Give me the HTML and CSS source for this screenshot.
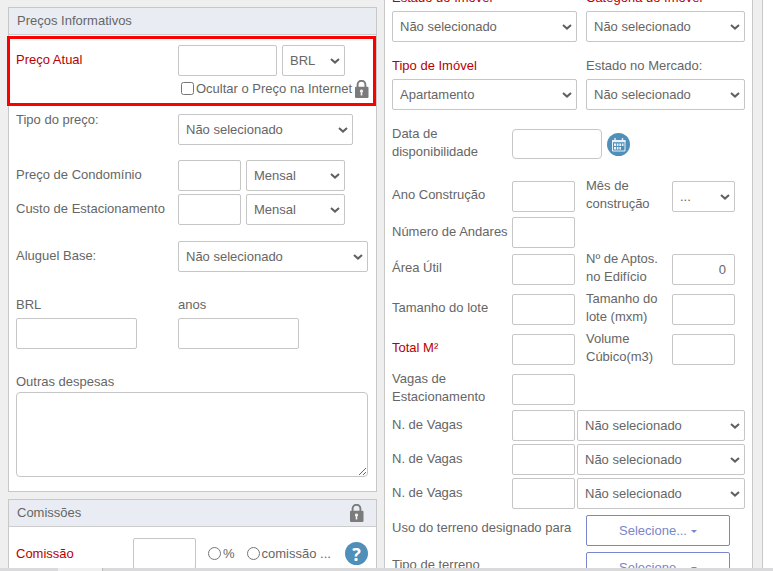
FILE: index.html
```html
<!DOCTYPE html>
<html lang="pt-BR">
<head>
<meta charset="utf-8">
<meta name="viewport" content="width=device-width, initial-scale=1">
<title>Cadastro de imóvel</title>
<link rel="stylesheet" href="styles.css">
</head>
<body>
<svg class="defs" aria-hidden="true">
  <symbol id="lock" viewBox="0 0 15 18">
    <path d="M3.600 8V4.600a3.900 3.900 0 0 1 7.800 0V8" fill="none" stroke="#7b7b7b" stroke-width="1.900"/>
    <rect x="1" y="6.700" width="13.500" height="11.300" rx="1" fill="#7b7b7b"/>
    <path d="M7.500 9.600a1.600 1.600 0 0 1 .8 3v2.800H6.700v-2.800a1.600 1.600 0 0 1 .8-3z" fill="#f2f2f2"/>
  </symbol>
</svg>
<main class="page">
  <div class="column">
    <section class="panel">
      <h2 class="panel-title">Preços Informativos</h2>
      <div class="panel-body">
        <div class="price-row highlight">
          <label class="label required" for="preco">Preço Atual</label>
          <div>
            <div class="controls">
              <input class="field mid" id="preco" type="text">
              <select class="field small" aria-label="Moeda"><option>BRL</option></select>
            </div>
            <div class="hide-price">
              <input class="tick" type="checkbox" id="ocultar">
              <label for="ocultar">Ocultar o Preço na Internet</label>
              <svg class="lock" aria-hidden="true"><use href="#lock"/></svg>
            </div>
          </div>
        </div>
        <div class="price-row type-row">
          <label class="label-top" for="tipo-preco">Tipo do preço:</label>
          <select class="field type-select" id="tipo-preco"><option>Não selecionado</option></select>
        </div>
        <div class="price-row spaced">
          <label class="label" for="condominio">Preço de Condomínio</label>
          <div class="controls">
            <input class="field small" id="condominio" type="text">
            <select class="field mid" aria-label="Período do condomínio"><option>Mensal</option></select>
          </div>
        </div>
        <div class="price-row tight">
          <label class="label" for="estacionamento">Custo de Estacionamento</label>
          <div class="controls">
            <input class="field small" id="estacionamento" type="text">
            <select class="field mid" aria-label="Período do estacionamento"><option>Mensal</option></select>
          </div>
        </div>
        <div class="price-row spaced">
          <label class="label" for="aluguel">Aluguel Base:</label>
          <select class="field" id="aluguel"><option>Não selecionado</option></select>
        </div>
        <div class="price-row terms">
          <div class="stack"><label for="brl">BRL</label><input class="field wide" id="brl" type="text"></div>
          <div class="stack"><label for="anos">anos</label><input class="field wide" id="anos" type="text"></div>
        </div>
        <div class="expenses">
          <label for="despesas">Outras despesas</label>
          <textarea class="expenses-text" id="despesas"></textarea>
        </div>
      </div>
    </section>
    <section class="panel">
      <h2 class="panel-title with-lock">Comissões <svg class="lock" aria-hidden="true"><use href="#lock"/></svg></h2>
      <div class="commission">
        <label class="required commission-label" for="comissao">Comissão</label>
        <input class="field small" id="comissao" type="text">
        <span class="choice percent"><input class="tick" type="radio" name="tipo-comissao" id="pct"><label for="pct">%</label></span>
        <span class="choice"><input class="tick" type="radio" name="tipo-comissao" id="fixa"><label for="fixa">comissão ...</label></span>
        <button class="help" type="button" aria-label="Ajuda">?</button>
      </div>
    </section>
  </div>

  <section class="panel details">
    <div class="pair">
      <div class="stack"><label class="required" for="estado">Estado do Imóvel</label><select class="field" id="estado"><option>Não selecionado</option></select></div>
      <div class="stack"><label class="required" for="categoria">Categoria do Imóvel</label><select class="field" id="categoria"><option>Não selecionado</option></select></div>
    </div>
    <div class="pair">
      <div class="stack"><label class="required" for="tipo">Tipo de Imóvel</label><select class="field" id="tipo"><option>Apartamento</option></select></div>
      <div class="stack"><label for="mercado">Estado no Mercado:</label><select class="field" id="mercado"><option>Não selecionado</option></select></div>
    </div>
    <div class="row tall date-row">
      <label for="data">Data de disponibilidade</label>
      <div class="date">
        <input class="field date-field" id="data" type="text">
        <button class="calendar" type="button" aria-label="Abrir calendário">
          <svg viewBox="0 0 23 23" aria-hidden="true">
            <circle cx="11.500" cy="11.500" r="11.500" fill="#4f8fb9"/>
            <path d="M5.500 7.500h12.500v10.500H5.500z" fill="none" stroke="#e8f2f8" stroke-width="1"/>
            <path d="M5 7h13.500v2.200H5z" fill="#e8f2f8"/>
            <path d="M8 5v3M15.500 5v3" stroke="#e8f2f8" stroke-width="1.400"/>
            <path d="M7 10.500h2v2.500H7zM9.800 10.500h1.700v2.500H9.800zM12.300 10.500h1.700v2.500h-1.700zM14.800 10.500h1.700v2.500h-1.700zM7 14h2v2.500H7zM9.800 14h1.700v2.500H9.800zM12.300 14h1.700v2.500h-1.700z" fill="#e8f2f8"/>
          </svg>
        </button>
      </div>
    </div>
    <div class="row tall year-row">
      <label class="one-line" for="ano">Ano Construção</label><input class="field small" id="ano" type="text">
      <label for="mes">Mês de construção</label><select class="field small" id="mes"><option>...</option></select>
    </div>
    <div class="row">
      <label class="label" for="andares">Número de Andares</label><input class="field small" id="andares" type="text">
    </div>
    <div class="row tall area-row">
      <label class="one-line" for="area">Área Útil</label><input class="field small" id="area" type="text">
      <label for="aptos">Nº de Aptos.<br>no Edifício</label><input class="field small number" id="aptos" type="text" value="0">
    </div>
    <div class="row tall">
      <label class="one-line" for="lote">Tamanho do lote</label><input class="field small" id="lote" type="text">
      <label for="lote-m">Tamanho do lote (mxm)</label><input class="field small" id="lote-m" type="text">
    </div>
    <div class="row tall">
      <label class="one-line required" for="total">Total M²</label><input class="field small" id="total" type="text">
      <label for="volume">Volume Cúbico(m3)</label><input class="field small" id="volume" type="text">
    </div>
    <div class="row tall">
      <label for="vagas">Vagas de Estacionamento</label><input class="field small" id="vagas" type="text">
    </div>
    <div class="spaces">
      <div class="space-row"><label class="label" for="v1">N. de Vagas</label><input class="field small" id="v1" type="text"><select class="field" aria-label="Tipo da vaga 1"><option>Não selecionado</option></select></div>
      <div class="space-row"><label class="label" for="v2">N. de Vagas</label><input class="field small" id="v2" type="text"><select class="field" aria-label="Tipo da vaga 2"><option>Não selecionado</option></select></div>
      <div class="space-row"><label class="label" for="v3">N. de Vagas</label><input class="field small" id="v3" type="text"><select class="field" aria-label="Tipo da vaga 3"><option>Não selecionado</option></select></div>
    </div>
    <div class="land-row">
      <span class="land-label" id="uso">Uso do terreno designado para</span>
      <button class="picker" type="button" aria-describedby="uso">Selecione...<span class="caret"></span></button>
    </div>
    <div class="land-row">
      <span class="land-label" id="terreno">Tipo de terreno</span>
      <button class="picker" type="button" aria-describedby="terreno">Selecione...<span class="caret"></span></button>
    </div>
  </section>

  <div class="next-panel"></div>
</main>
<div class="scrollbar"><div class="thumb"></div></div>
</body>
</html>
```
FILE: styles.css
```css
* { box-sizing: border-box; }

body {
  margin: 0;
  height: 100vh;
  display: flex;
  flex-direction: column;
  overflow: hidden;
  background: #efefef;
  color: #666;
  font: 13px/18px "Liberation Sans", Arial, sans-serif;
}

.defs { display: none; }

.page {
  flex: 1;
  min-height: 0;
  overflow: hidden;
  display: grid;
  grid-template-columns: minmax(0, 1fr) minmax(0, 1fr) 13px;
  column-gap: 7px;
  padding-left: 8px;
}

.column {
  display: flex;
  flex-direction: column;
  gap: 7px;
  padding-top: 7px;
}

.panel {
  background: #fff;
  border: 1px solid #c8c8c8;
}

.panel-title {
  margin: 0;
  height: 27px;
  padding: 4px 8px;
  background: #e9edf3;
  border-bottom: 1px solid #ccc;
  font-size: 13px;
  font-weight: normal;
}

.with-lock {
  display: flex;
  justify-content: space-between;
}

.panel-body { padding: 10px 8px 14px 7px; }

.label { padding-top: 6px; }
.label-top { padding-top: 1px; }
.required { color: #b90000; }

.price-row {
  display: grid;
  grid-template-columns: 162px minmax(0, 1fr);
  align-items: start;
}

.controls {
  display: flex;
  gap: 5px;
}

.field {
  width: 100%;
  height: 31px;
  border: 1px solid #c6c6c6;
  border-radius: 2px;
  padding: 0 8px;
  background-color: #fff;
  color: #666;
  font: inherit;
}

select.field {
  appearance: none;
  padding: 0 18px 0 7px;
  background: #fff url("data:image/svg+xml,%3Csvg xmlns='http://www.w3.org/2000/svg' width='10' height='6'%3E%3Cpath d='M1 1l4 3.600L9 1' fill='none' stroke='%23606060' stroke-width='2'/%3E%3C/svg%3E") no-repeat right 4px center;
}

.small { width: 63px; }
.mid { width: 99px; }
.wide { width: 121px; }
.number { text-align: right; }

.highlight {
  position: relative;
  height: 65px;
}

.highlight::after {
  content: "";
  position: absolute;
  inset: -9px -8px 4px -9px;
  border: 3px solid #fa0000;
  pointer-events: none;
}

.hide-price {
  display: flex;
  align-items: center;
  padding: 3px 0 0 3px;
  white-space: nowrap;
}

.tick {
  flex: none;
  width: 13px;
  height: 13px;
  margin: 0;
}

.hide-price label { margin-left: 2px; }

.lock {
  flex: none;
  width: 15px;
  height: 18px;
}

.hide-price .lock { margin: 1px 0 0 2px; }
.with-lock .lock { margin-right: 4px; }

.type-select {
  width: 175px;
  margin-top: 4px;
}

.spaced { margin-top: 16px; }
.tight { margin-top: 3px; }
.type-row { height: 34px; }

.stack {
  display: flex;
  flex-direction: column;
  gap: 4px;
}

.stack label { padding-top: 1px; }

.terms { margin-top: 23px; }
.expenses { margin-top: 24px; }

.expenses label { display: block; }

.expenses-text {
  display: block;
  width: 100%;
  height: 85px;
  margin-top: 1px;
  border: 1px solid #c6c6c6;
  border-radius: 4px;
  font: inherit;
}

.commission {
  display: flex;
  align-items: center;
  height: 62px;
  padding: 0 8px 9px 7px;
}

.commission-label { width: 117px; }

.choice {
  display: flex;
  align-items: center;
  gap: 2px;
}

.percent { margin: 0 12px; }

.help,
.calendar {
  width: 23px;
  height: 23px;
  padding: 0;
  border: 0;
  border-radius: 50%;
}

.help {
  margin-left: auto;
  background: #4f8fb9;
  color: #fff;
  font: bold 18px/22px "Open Sans", sans-serif;
}

.calendar { background: none; }
.calendar svg { display: block; }

.details {
  margin-top: -21px;
  padding: 8px 7px;
}

.pair {
  display: grid;
  grid-template-columns: 185fr 159fr;
  column-gap: 9px;
  height: 68px;
}

.row,
.space-row,
.land-row {
  display: grid;
  align-items: start;
  margin-top: 4px;
}

.row { grid-template-columns: 120fr 74fr 86fr 73fr; }
.tall .field { margin-top: 4px; }
.one-line { padding-top: 9px; }

.date-row { margin-top: 1px; }
.year-row { margin-top: 16px; }
.area-row { margin-top: 2px; }

.date {
  grid-column: 2 / -1;
  display: flex;
  align-items: center;
  gap: 5px;
}

.date-field {
  width: 90px;
  height: 30px;
  border-radius: 4px;
}

.calendar { margin-top: 4px; }

.spaces {
  display: grid;
  gap: 3px;
  margin-top: 4px;
}

.space-row {
  grid-template-columns: 120fr 65fr 168fr;
  margin: 0;
}

.land-row {
  grid-template-columns: 194fr 159fr;
  margin-top: 6px;
}

.land-label { padding-top: 4px; }

.picker {
  width: 144px;
  height: 31px;
  padding: 0;
  border: 1px solid #7986cb;
  border-radius: 2px;
  background: #fff;
  color: #7986cb;
  font: inherit;
}

.caret {
  display: inline-block;
  margin-left: 4px;
  vertical-align: 2px;
  border: 3px solid transparent;
  border-top-color: #7986cb;
  border-bottom: 0;
}

.next-panel {
  margin-left: 2px;
  background: #fff;
  border-left: 1px solid #c8c8c8;
}

.scrollbar {
  flex: none;
  height: 3px;
  padding-left: 58px;
  background: #dad9dc;
}

.thumb {
  width: 45px;
  height: 3px;
  background: #efeff0;
  border-right: 1px solid #bbb;
}
```
